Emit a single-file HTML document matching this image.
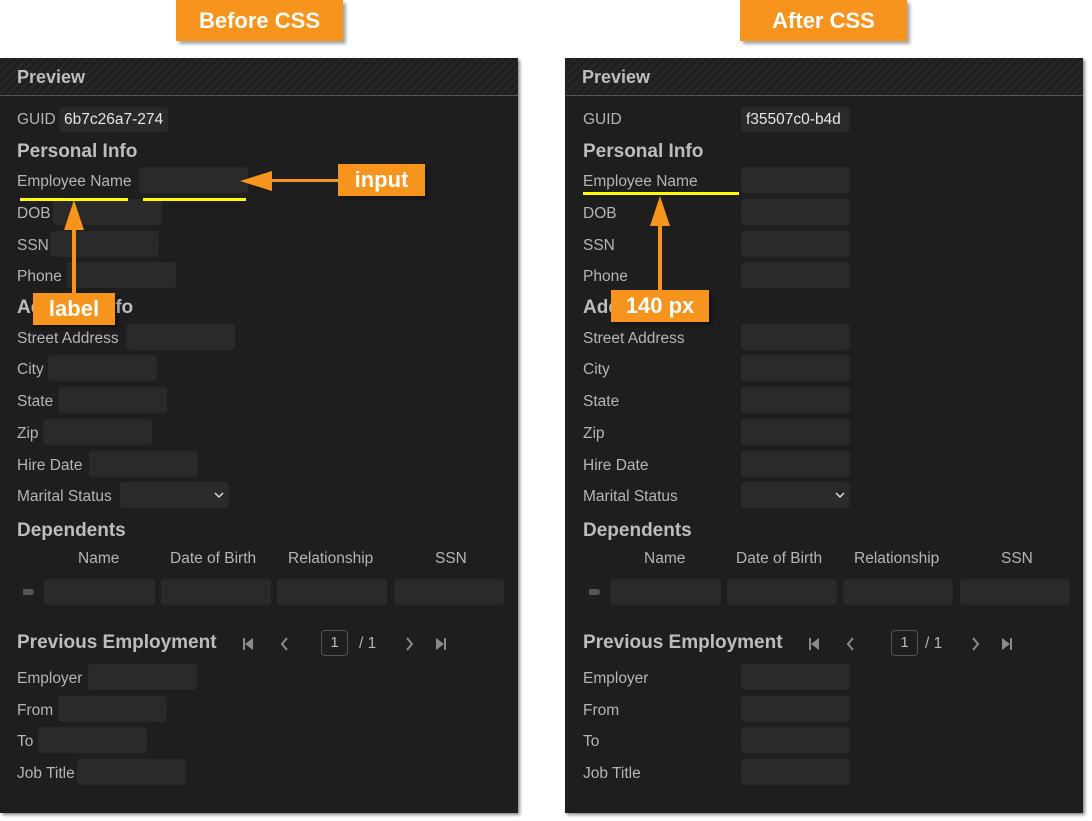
<!DOCTYPE html>
<html><head><meta charset="utf-8"><style>
*{margin:0;padding:0;box-sizing:border-box}
body{width:1092px;height:821px;background:#fff;position:relative;overflow:hidden;font-family:"Liberation Sans",sans-serif}
.p{position:absolute;top:58px;width:518px;height:755px;background:#1e1e1e;box-shadow:2px 2px 3px rgba(0,0,0,.45)}
.h{position:absolute;left:0;top:0;right:0;height:38px;border-bottom:1px solid #555;background:repeating-linear-gradient(135deg,#262626 0 3px,#1f1f1f 3px 6px)}
.h span{position:absolute;left:17px;top:9px;font-weight:bold;font-size:18px;color:#bdbdbd}
.l{position:absolute;font-size:15.5px;color:#b5b5b5;white-space:nowrap;line-height:18px}
.t{position:absolute;font-size:19px;font-weight:bold;color:#bdbdbd;white-space:nowrap;line-height:20px}
.i{position:absolute;width:109px;height:26px;background:#2a2a2a;border-radius:4px}
.v{position:absolute;font-size:15.5px;color:#e6e6e6;line-height:18px;white-space:nowrap;overflow:hidden}
.o{position:absolute;background:#f7941d;color:#fff;font-weight:bold;text-align:center;box-shadow:3px 3px 3px rgba(0,0,0,.35);font-family:"Liberation Sans",sans-serif}
.y{position:absolute;height:3px;background:#ffff00}
</style></head><body>

<div class="o" style="left:176px;top:0;width:167px;height:41px;font-size:22px;line-height:41px">Before CSS</div>
<div class="o" style="left:740px;top:0;width:167px;height:41px;font-size:22px;line-height:41px">After CSS</div>

<!-- LEFT PANEL -->
<div class="p" style="left:0">
<div class="h"><span>Preview</span></div>
</div>
<div class="l" style="left:17px;top:111px">GUID</div>
<div class="i" style="left:59px;top:107px;width:109px;height:25px"></div>
<div class="v" style="left:64px;top:111px;width:102px">6b7c26a7-274</div>
<div class="t" style="left:17px;top:142px">Personal Info</div>
<div class="l" style="left:17px;top:173px">Employee Name</div><div class="i" style="left:139px;top:167px"></div>
<div class="l" style="left:17px;top:205px">DOB</div><div class="i" style="left:53px;top:199px"></div>
<div class="l" style="left:17px;top:237px">SSN</div><div class="i" style="left:50px;top:231px"></div>
<div class="l" style="left:17px;top:268px">Phone</div><div class="i" style="left:67px;top:262px"></div>
<div class="t" style="left:17px;top:298px">Address Info</div>
<div class="l" style="left:17px;top:330px">Street Address</div><div class="i" style="left:126px;top:324px"></div>
<div class="l" style="left:17px;top:361px">City</div><div class="i" style="left:48px;top:355px"></div>
<div class="l" style="left:17px;top:393px">State</div><div class="i" style="left:58px;top:387px"></div>
<div class="l" style="left:17px;top:425px">Zip</div><div class="i" style="left:43px;top:419px"></div>
<div class="l" style="left:17px;top:457px">Hire Date</div><div class="i" style="left:89px;top:451px"></div>
<div class="l" style="left:17px;top:488px">Marital Status</div><div class="i" style="left:120px;top:482px"></div>
<div class="t" style="left:17px;top:521px">Dependents</div>
<div class="l" style="left:78px;top:550px">Name</div>
<div class="l" style="left:170px;top:550px">Date of Birth</div>
<div class="l" style="left:288px;top:550px">Relationship</div>
<div class="l" style="left:435px;top:550px">SSN</div>
<div style="position:absolute;left:23px;top:589px;width:11px;height:6px;background:#555;border-radius:0 3px 3px 0"></div>
<div class="i" style="left:44px;top:579px;width:111px"></div>
<div class="i" style="left:161px;top:579px;width:110px"></div>
<div class="i" style="left:277px;top:579px;width:110px"></div>
<div class="i" style="left:394px;top:579px;width:110px"></div>
<div class="t" style="left:17px;top:633px">Previous Employment</div>
<div style="position:absolute;left:321px;top:630px;width:27px;height:26px;border:1px solid #555;border-radius:4px;color:#bbb;font-size:15px;text-align:center;line-height:24px">1</div>
<div class="l" style="left:359px;top:635px">/ 1</div>
<div class="l" style="left:17px;top:670px">Employer</div><div class="i" style="left:88px;top:664px"></div>
<div class="l" style="left:17px;top:702px">From</div><div class="i" style="left:58px;top:696px"></div>
<div class="l" style="left:17px;top:733px">To</div><div class="i" style="left:38px;top:727px"></div>
<div class="l" style="left:17px;top:765px">Job Title</div><div class="i" style="left:77px;top:759px"></div>

<!-- RIGHT PANEL -->
<div class="p" style="left:565px">
<div class="h"><span>Preview</span></div>
</div>
<div class="l" style="left:583px;top:111px">GUID</div>
<div class="i" style="left:741px;top:107px;width:109px;height:25px"></div>
<div class="v" style="left:746px;top:111px;width:102px">f35507c0-b4d</div>
<div class="t" style="left:583px;top:142px">Personal Info</div>
<div class="l" style="left:583px;top:173px">Employee Name</div><div class="i" style="left:741px;top:167px"></div>
<div class="l" style="left:583px;top:205px">DOB</div><div class="i" style="left:741px;top:199px"></div>
<div class="l" style="left:583px;top:237px">SSN</div><div class="i" style="left:741px;top:231px"></div>
<div class="l" style="left:583px;top:268px">Phone</div><div class="i" style="left:741px;top:262px"></div>
<div class="t" style="left:583px;top:298px">Address Info</div>
<div class="l" style="left:583px;top:330px">Street Address</div><div class="i" style="left:741px;top:324px"></div>
<div class="l" style="left:583px;top:361px">City</div><div class="i" style="left:741px;top:355px"></div>
<div class="l" style="left:583px;top:393px">State</div><div class="i" style="left:741px;top:387px"></div>
<div class="l" style="left:583px;top:425px">Zip</div><div class="i" style="left:741px;top:419px"></div>
<div class="l" style="left:583px;top:457px">Hire Date</div><div class="i" style="left:741px;top:451px"></div>
<div class="l" style="left:583px;top:488px">Marital Status</div><div class="i" style="left:741px;top:482px"></div>
<div class="t" style="left:583px;top:521px">Dependents</div>
<div class="l" style="left:644px;top:550px">Name</div>
<div class="l" style="left:736px;top:550px">Date of Birth</div>
<div class="l" style="left:854px;top:550px">Relationship</div>
<div class="l" style="left:1001px;top:550px">SSN</div>
<div style="position:absolute;left:589px;top:589px;width:11px;height:6px;background:#555;border-radius:0 3px 3px 0"></div>
<div class="i" style="left:610px;top:579px;width:111px"></div>
<div class="i" style="left:727px;top:579px;width:110px"></div>
<div class="i" style="left:843px;top:579px;width:110px"></div>
<div class="i" style="left:960px;top:579px;width:110px"></div>
<div class="t" style="left:583px;top:633px">Previous Employment</div>
<div style="position:absolute;left:891px;top:630px;width:27px;height:26px;border:1px solid #555;border-radius:4px;color:#bbb;font-size:15px;text-align:center;line-height:24px">1</div>
<div class="l" style="left:925px;top:635px">/ 1</div>
<div class="l" style="left:583px;top:670px">Employer</div><div class="i" style="left:741px;top:664px"></div>
<div class="l" style="left:583px;top:702px">From</div><div class="i" style="left:741px;top:696px"></div>
<div class="l" style="left:583px;top:733px">To</div><div class="i" style="left:741px;top:727px"></div>
<div class="l" style="left:583px;top:765px">Job Title</div><div class="i" style="left:741px;top:759px"></div>

<!-- icons -->
<svg style="position:absolute;left:0;top:0" width="1092" height="821">
<defs>
<g id="pager">
<rect x="0" y="-6" width="2" height="12" fill="#8a8a8a"/>
<polygon points="2,0 10,-6 10,6" fill="#8a8a8a"/>
<polyline points="44,-6 39,0 44,6" fill="none" stroke="#8a8a8a" stroke-width="2"/>
<polyline points="164,-6 169,0 164,6" fill="none" stroke="#8a8a8a" stroke-width="2"/>
<polygon points="193,-6 201,0 193,6" fill="#8a8a8a"/>
<rect x="201" y="-6" width="2" height="12" fill="#8a8a8a"/>
</g>
<polyline id="chev" points="0,0 4,4 8,0" fill="none" stroke="#ddd" stroke-width="1.5"/>
</defs>
<use href="#pager" x="243" y="644"/>
<use href="#pager" x="809" y="644"/>
<use href="#chev" x="215" y="493"/>
<use href="#chev" x="836" y="493"/>
<g fill="#f7941d">
<rect x="270" y="179" width="72" height="3"/>
<polygon points="240,181 272,171 272,191"/>
<rect x="72" y="225" width="4" height="70"/>
<polygon points="74,200 64,230 84,230"/>
<rect x="658" y="222" width="4" height="70"/>
<polygon points="660,196 650,226 670,226"/>
</g></svg>

<!-- annotations -->
<div class="y" style="left:20px;top:198px;width:108px"></div>
<div class="y" style="left:143px;top:198px;width:103px"></div>
<div class="y" style="left:583px;top:192px;width:156px"></div>
<div class="o" style="left:338px;top:164px;width:87px;height:32px;font-size:22px;line-height:32px">input</div>
<div class="o" style="left:33px;top:293px;width:82px;height:32px;font-size:22px;line-height:32px">label</div>
<div class="o" style="left:611px;top:290px;width:98px;height:32px;font-size:22px;line-height:32px">140 px</div>
</body></html>
